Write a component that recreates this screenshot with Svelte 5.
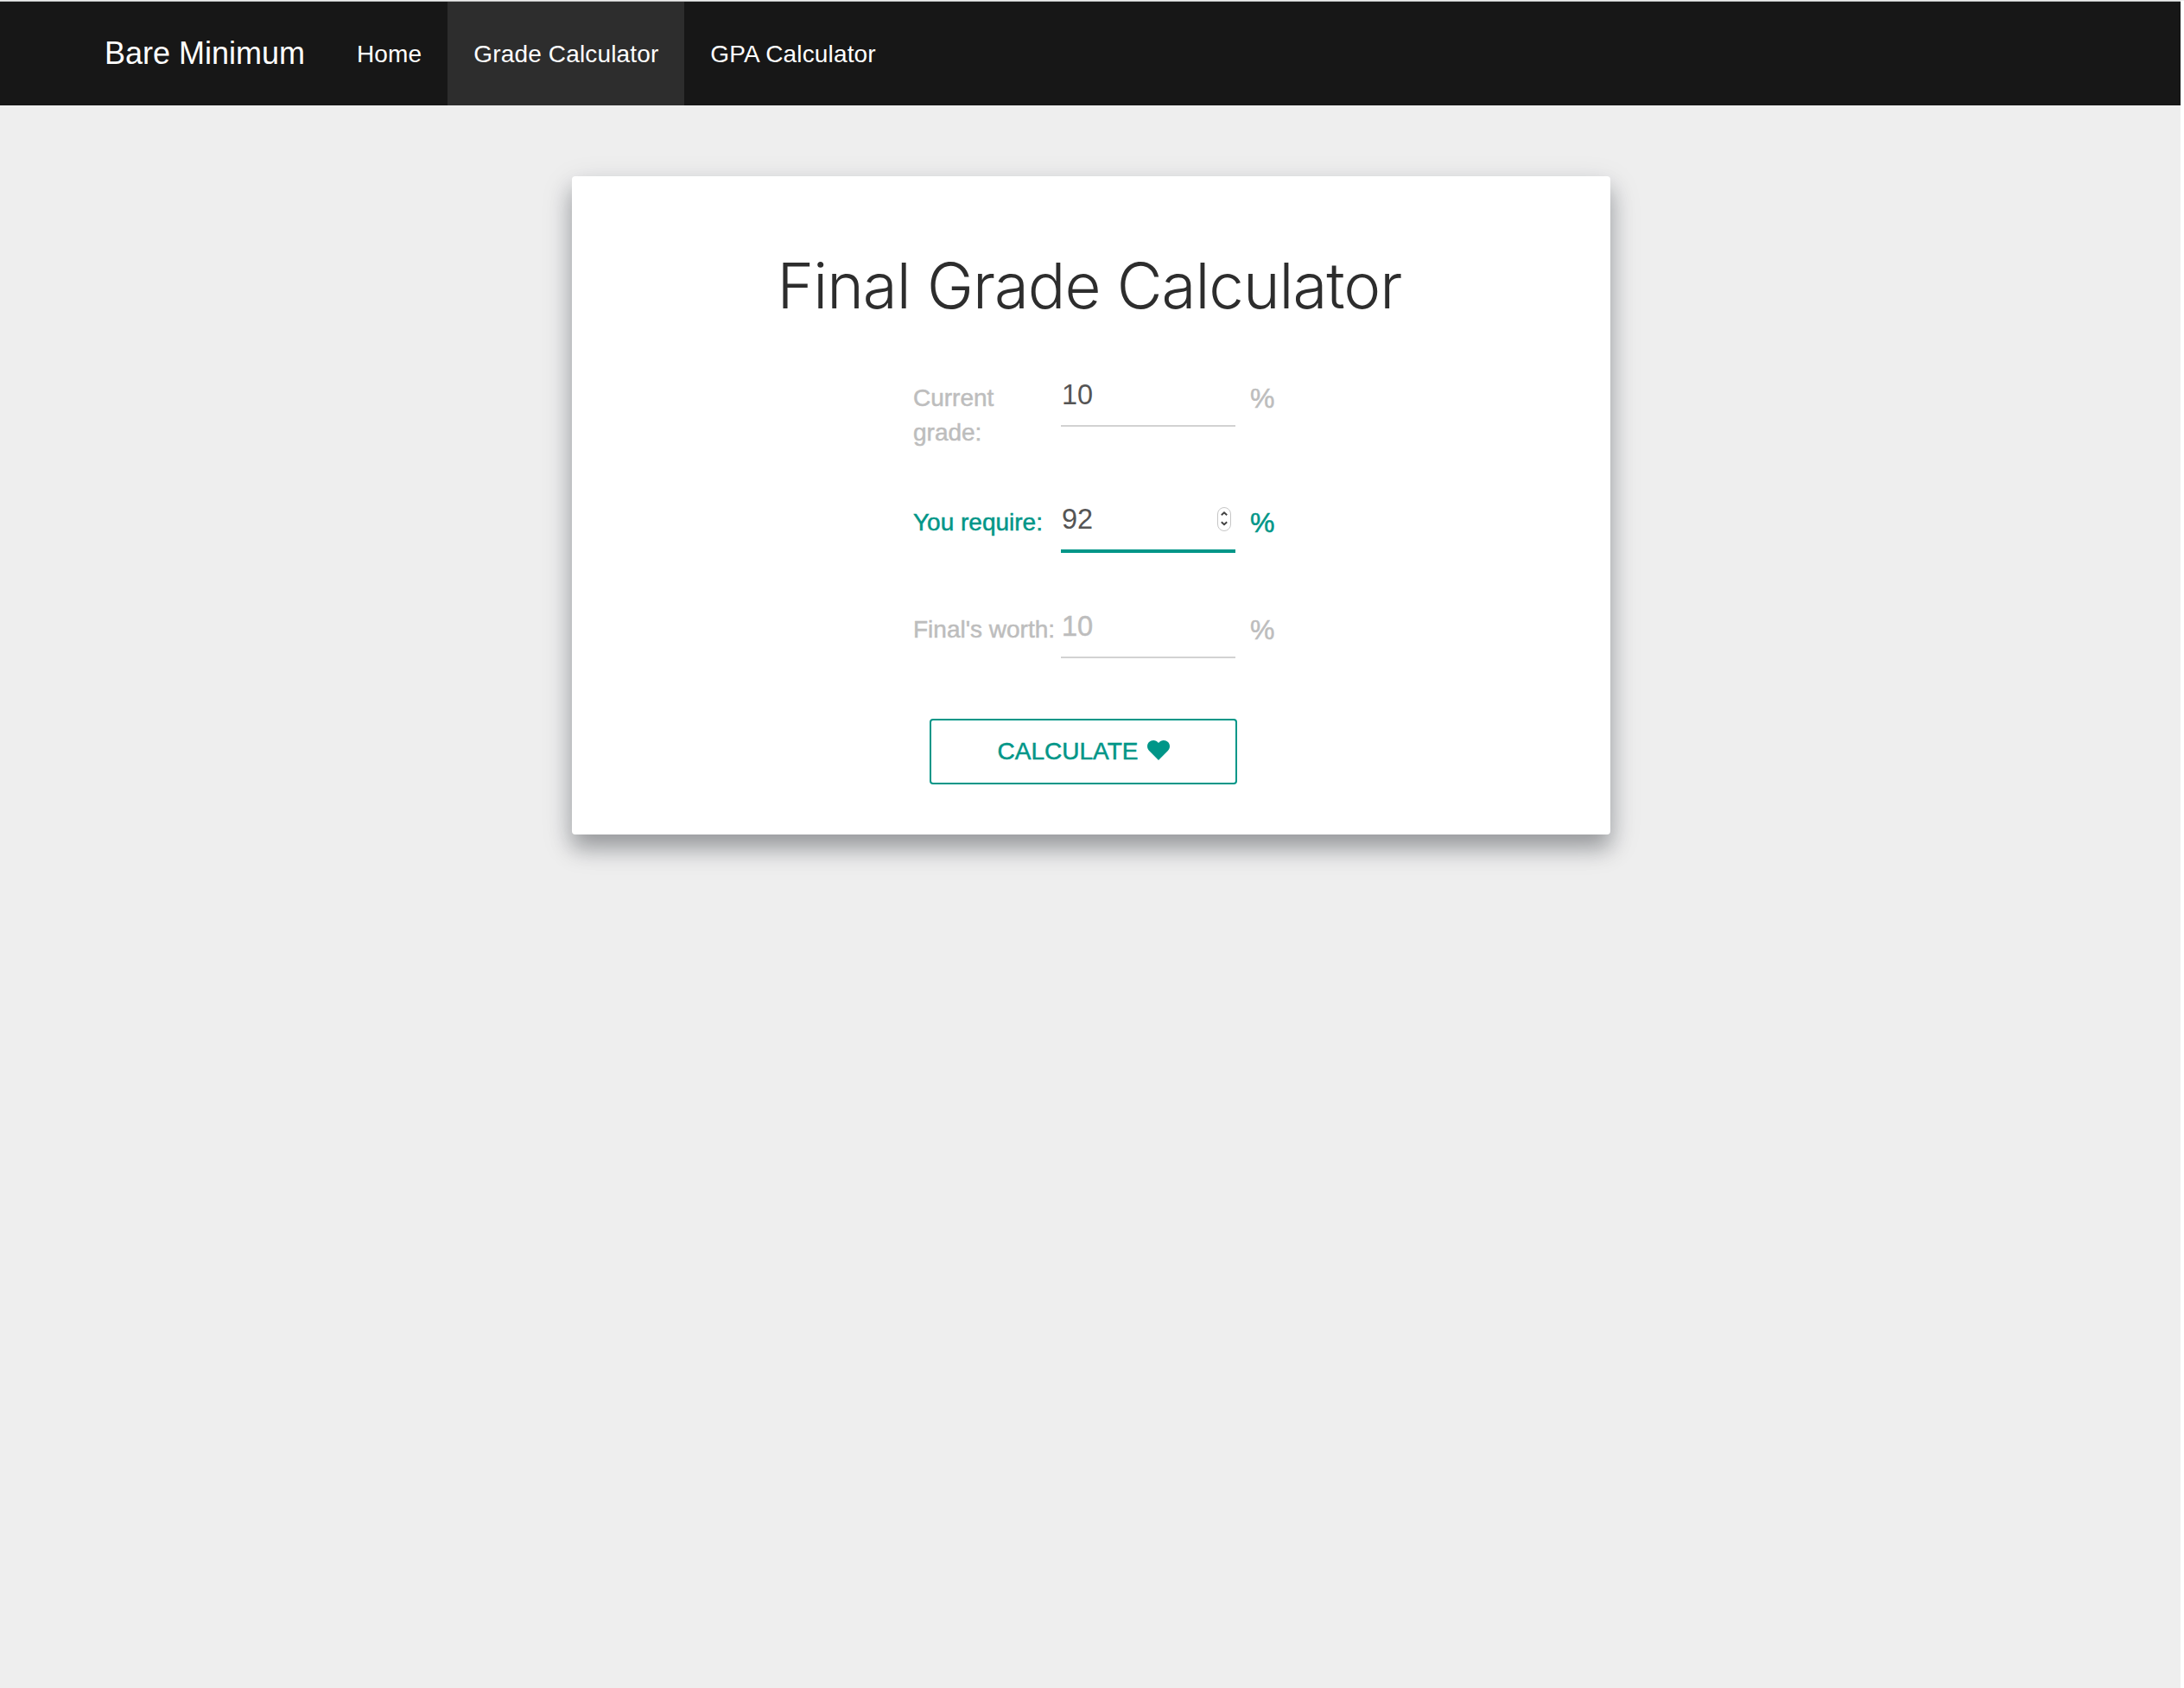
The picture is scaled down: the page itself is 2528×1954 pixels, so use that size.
<script>
  let fields = $state([
    { id: 'current', label: 'Current grade:', value: '10', placeholder: '', focused: false },
    { id: 'require', label: 'You require:', value: '92', placeholder: '', focused: true },
    { id: 'worth', label: "Final's worth:", value: '', placeholder: '10', focused: false },
  ]);
  const links = [
    { label: 'Home', active: false },
    { label: 'Grade Calculator', active: true },
    { label: 'GPA Calculator', active: false },
  ];
</script>

<div class="window">
  <div class="page">
    <nav>
      <a class="brand" href="#home">Bare Minimum</a>
      {#each links as link}
        <a class="link" class:active={link.active} href="#nav">{link.label}</a>
      {/each}
    </nav>

    <main>
      <h1>Final Grade Calculator</h1>
      <form>
        {#each fields as field}
          <div class="row" class:focused={field.focused}>
            <label for={field.id}>{field.label}</label>
            <div class="control">
              <input id={field.id} type="text" placeholder={field.placeholder} bind:value={field.value} />
              {#if field.focused}
                <svg class="spinner" viewBox="0 0 18 30" width="18" height="30">
                  <rect x="1.5" y="1.5" width="15" height="27" rx="7.5" fill="#fff" stroke="#c6c6c6" />
                  <path d="M5.8 10.300 9 7.300l3.200 3M5.800 18.200l3.200 3 3.200-3" fill="none" stroke="#404040" stroke-width="1.900" />
                </svg>
              {/if}
            </div>
            <span class="unit">%</span>
          </div>
        {/each}
        <button type="button">
          <span>CALCULATE</span>
          <svg viewBox="0 0 26 23" width="26" height="23">
            <path d="M13 23 2.100 12C-.8 9-.5 4.700 2 2.100 5.200-1 10.200-.6 13 3.100 15.800-.6 20.800-1 24 2.100c2.500 2.600 2.800 6.900-.1 9.900Z" fill="#009688" />
          </svg>
        </button>
      </form>
    </main>
  </div>
</div>

<style>
  :global(body) { background: #fff; }
  * { box-sizing: border-box; }
  .window {
    height: 1954px;
    padding-right: 4px;
    border-top: 1px solid #eee;
    font-family: "Liberation Sans", Arial, sans-serif;
    overflow: hidden;
  }
  .page {
    height: 100%;
    background: #eee;
    border-top: 1px solid #b4b6b6;
  }
  nav {
    display: flex;
    height: 120px;
    padding-left: 90px;
    background: #171717;
    line-height: 120px;
  }
  nav a { color: #fff; text-decoration: none; white-space: nowrap; }
  .brand { width: 293px; padding: 0 28px 0 31px; font-size: 36px; letter-spacing: 0; }
  .link { padding: 0 30px; font-size: 28px; letter-spacing: 0.15px; line-height: 121px; height: 120px; }
  .link.active { background: #2d2d2d; }
  main {
    width: 1202px;
    height: 762px;
    margin: 82px 0 0 662px;
    padding-top: 81px;
    background: #fff;
    border-radius: 4px;
    box-shadow: 0 16px 24px 0 rgba(0, 0, 0, 0.26), 0 12px 36px 0 rgba(10, 30, 60, 0.17);
  }
  h1 {
    margin: 0;
    padding-right: 4px;
    text-align: center;
    font: 300 72.500px/92px Inter, "Liberation Sans", sans-serif;
    letter-spacing: -1px;
    color: #2d2d2d;
    white-space: nowrap;
  }
  form {
    display: flex;
    flex-direction: column;
    width: 440px;
    margin: 61px 0 0 394px;
  }
  .row {
    display: grid;
    grid-template-columns: 172px 202px auto;
    align-items: start;
    height: 124px;
    color: #bdbdbd;
  }
  .row:first-child { height: 144px; }
  label, .unit, button span { -webkit-text-stroke: 0.5px currentColor; }
  label { padding: 3px 0 0 1px; font-size: 28px; line-height: 40px; margin-right: -8px; }
  .control { position: relative; height: 56px; border-bottom: 2px solid #d2d2d2; }
  .focused { color: #009688; }
  .focused .control { height: 58px; border-bottom: 4px solid #009688; }
  input {
    display: block;
    width: 100%;
    height: 39px;
    padding: 0 0 0 1px;
    border: 0;
    outline: 0;
    background: none;
    font: 32.500px "Liberation Sans", Arial, sans-serif;
    color: #555;
  }
  input::placeholder { color: #bdbdbd; opacity: 1; -webkit-text-stroke: 0.5px #bdbdbd; }
  .spinner { position: absolute; right: 4px; top: 4px; }
  .unit { padding: 3px 0 0 17px; font-size: 32px; line-height: 40px; }
  button {
    display: flex;
    align-items: center;
    justify-content: center;
    gap: 11px;
    width: 356px;
    height: 76px;
    margin: 2px 0 0 20px;
    padding: 0 0 0 1px;
    background: #fff;
    border: 2px solid #009688;
    border-radius: 4px;
    font: 28px "Liberation Sans", Arial, sans-serif;
    color: #009688;
  }
  button svg { margin-bottom: 4px; }
</style>
